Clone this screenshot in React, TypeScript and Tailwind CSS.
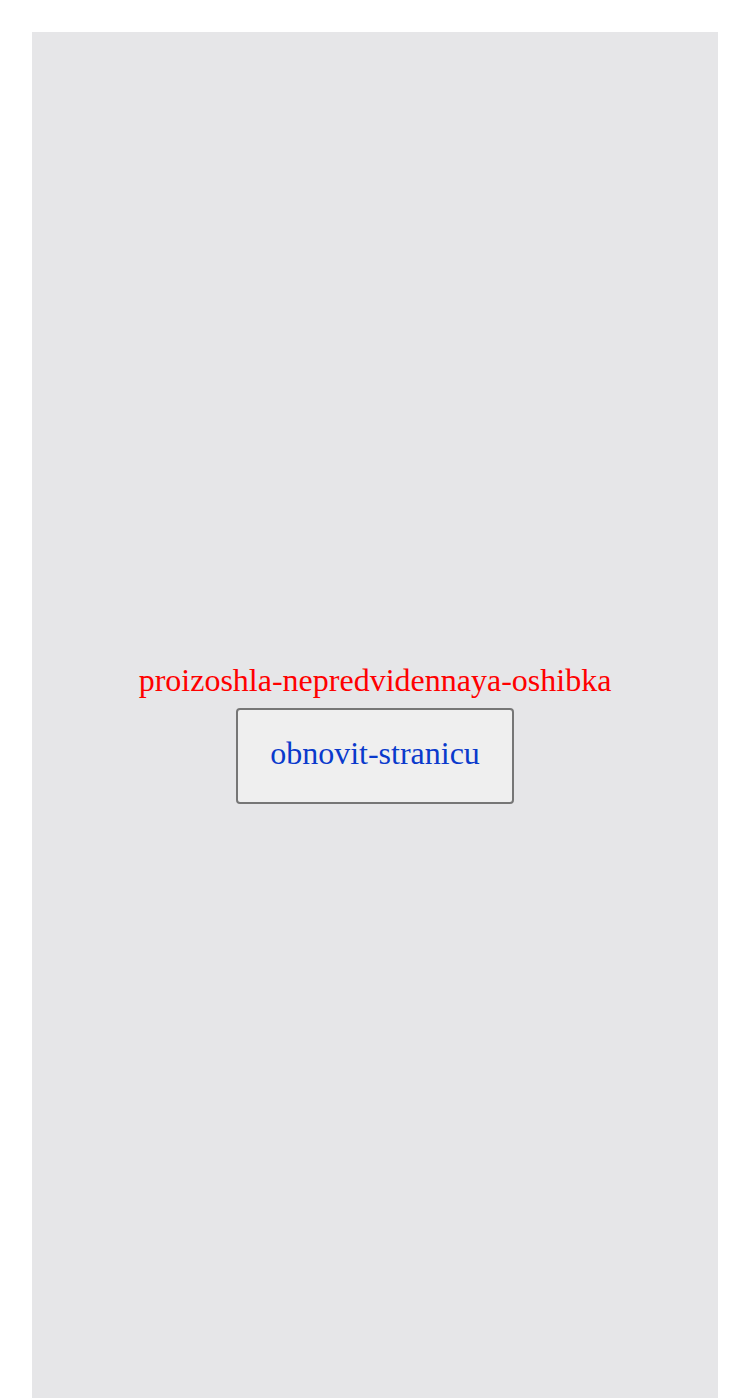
export default function App() {
  return (
    <div className="bg-white p-8" style={{ fontFamily: '"Liberation Serif", serif' }}>
      <div className="flex min-h-screen flex-col items-center justify-center bg-[#e6e6e8] pt-[4px]">
        <p className="text-[32px] leading-[36px] text-[#ff0000]">proizoshla-nepredvidennaya-oshibka</p>
        <button className="mt-[10px] rounded-[4px] border-2 border-[#767676] bg-[#efefef] px-8 pt-[25px] pb-[31px] text-[32px] leading-[36px] text-[#0a3acc]">
          obnovit-stranicu
        </button>
      </div>
    </div>
  );
}
